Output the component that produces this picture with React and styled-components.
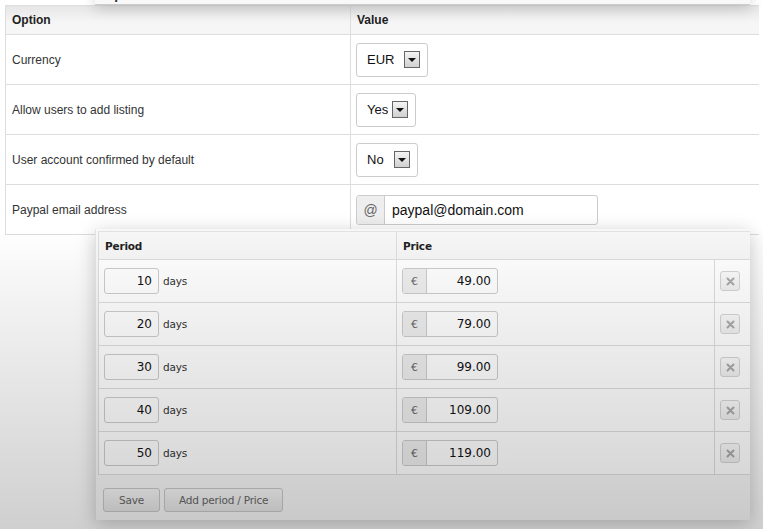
import React from 'react'
import styled, { createGlobalStyle } from 'styled-components'

const Global = createGlobalStyle`
    html, body {
        margin:0;
        padding:0;
        background:#fff;
    }
    body {
        font-family:'Liberation Sans', Arial, sans-serif;
        color:#333;
    }
`

const Page = styled.div`
    position:relative;
    width:763px;
    height:529px;
    overflow:hidden;
    background:#fff;
    padding:5px 0 0 5px;
    box-sizing:border-box;
`

const Fade = styled.div`
    position:absolute;
    left:0;
    right:0;
    top:228px;
    bottom:0;
    pointer-events:none;
    background:linear-gradient(to bottom, rgba(0,0,0,0) 0%, rgba(0,0,0,0.05) 25%, rgba(0,0,0,0.19) 100%);
    z-index:5;
`

/* ---------- options table ---------- */

const OptionsTable = styled.div`
    width:753px;
    border-left:1px solid #ddd;
    display:grid;
    grid-template-columns:344px 1fr;
`

const HeadCell = styled.div`
    height:30px;
    box-sizing:border-box;
    border-top:1px solid #ddd;
    border-bottom:1px solid #ddd;
    border-left:${p => p.$first ? 'none' : '1px solid #ddd'};
    background:linear-gradient(to bottom, #e6e6e6, #f6f6f6 60%, #f6f6f6);
    display:flex;
    align-items:center;
    padding-left:6px;
    font-weight:bold;
    font-size:12px;
    color:#222;
`

const Cell = styled.div`
    height:50px;
    box-sizing:border-box;
    border-bottom:1px solid #ddd;
    border-left:${p => p.$first ? 'none' : '1px solid #ddd'};
    display:flex;
    align-items:center;
    padding-left:${p => p.$first ? '6px' : '5px'};
    font-size:12px;
    color:#333;
`

const Select = styled.div`
    height:34px;
    box-sizing:border-box;
    border:1px solid #ccc;
    border-radius:3px;
    background:#fff;
    display:flex;
    align-items:center;
    padding:0 7px 0 10px;
    gap:${p => p.$gap}px;
    font-size:13px;
    color:#111;
`

const Arrow = styled.span`
    width:16px;
    height:17px;
    box-sizing:border-box;
    border:1px solid #666;
    background:linear-gradient(to bottom, #f4f4f4, #d0d0d0);
    display:flex;
    align-items:center;
    justify-content:center;
    &::after {
        content:'';
        border-left:4px solid transparent;
        border-right:4px solid transparent;
        border-top:4px solid #111;
    }
`

const InputGroup = styled.div`
    display:flex;
    height:30px;
    width:242px;
    box-sizing:border-box;
    border:1px solid #ccc;
    border-radius:3px;
    overflow:hidden;
    background:#fff;
`

const Addon = styled.span`
    width:${p => p.$w}px;
    flex:none;
    background:${p => p.$bg || '#eee'};
    border-right:1px solid #ccc;
    display:flex;
    align-items:center;
    justify-content:center;
    color:#666;
    font-size:${p => p.$size || 13}px;
`

const TextValue = styled.span`
    display:flex;
    align-items:center;
    padding-left:7px;
    font-size:14px;
    color:#111;
`

/* ---------- floating panels ---------- */

const PeekPanel = styled.div`
    position:absolute;
    left:95px;
    top:-24px;
    width:655px;
    height:28px;
    background:#f8f8f8;
    border-bottom:1px solid #ccc;
    box-shadow:0 4px 14px rgba(0,0,0,0.16);
    display:grid;
    grid-template-columns:292px 1fr;
    font-family:'DejaVu Sans', Tahoma, sans-serif;
    font-size:11px;
    font-weight:bold;
    color:#333;
    z-index:3;
    & > span {
        padding:14px 0 0 10px;
    }
`

const PricePanel = styled.div`
    position:absolute;
    left:95px;
    top:229px;
    width:655px;
    height:291px;
    box-sizing:border-box;
    background:#f7f7f7;
    border-left:1px solid #e4e4e4;
    box-shadow:0 4px 18px rgba(0,0,0,0.22);
    padding:2px 0 0 2px;
    font-family:'DejaVu Sans', Tahoma, sans-serif;
    z-index:4;
`

const PriceTable = styled.div`
    display:grid;
    grid-template-columns:297px 318px 1fr;
    border-left:1px solid #ddd;
    border-top:1px solid #e2e2e2;
`

const PHead = styled.div`
    height:28px;
    box-sizing:border-box;
    grid-column:${p => p.$span || 'auto'};
    border-bottom:1px solid #ddd;
    border-left:${p => p.$first ? 'none' : '1px solid #ddd'};
    background:#f6f6f6;
    display:flex;
    align-items:center;
    padding-left:6px;
    font-size:10.5px;
    font-weight:bold;
    color:#222;
    letter-spacing:-0.2px;
`

const PCell = styled.div`
    height:43px;
    box-sizing:border-box;
    border-bottom:1px solid #ddd;
    border-left:${p => p.$first ? 'none' : '1px solid #ddd'};
    background:#fff;
    display:flex;
    align-items:center;
    padding-left:${p => p.$first ? '5px' : '5px'};
    gap:4px;
`

const DaysInput = styled.span`
    width:55px;
    height:26px;
    box-sizing:border-box;
    border:1px solid #ccc;
    border-radius:3px;
    background:#fff;
    display:flex;
    align-items:center;
    justify-content:flex-end;
    padding-right:6px;
    font-size:12px;
    color:#111;
`

const Unit = styled.span`
    font-size:10.5px;
    color:#333;
    letter-spacing:-0.2px;
`

const PriceGroup = styled.span`
    display:flex;
    width:96px;
    height:26px;
    box-sizing:border-box;
    border:1px solid #ccc;
    border-radius:3px;
    overflow:hidden;
    background:#fff;
`

const PriceValue = styled.span`
    flex:1;
    display:flex;
    align-items:center;
    justify-content:flex-end;
    padding-right:6px;
    font-size:12px;
    color:#111;
`

const RemoveBtn = styled.span`
    width:20px;
    height:20px;
    box-sizing:border-box;
    border:1px solid #d4d4d4;
    border-radius:3px;
    background:linear-gradient(to bottom, #fafafa, #eeeeee);
    display:flex;
    align-items:center;
    justify-content:center;
`

const Toolbar = styled.div`
    display:flex;
    gap:4px;
    padding:13px 0 0 5px;
`

const Button = styled.button`
    height:24px;
    padding:0 ${p => p.$pad}px;
    border:1px solid #c8c8c8;
    border-radius:3px;
    background:linear-gradient(to bottom, #f6f6f6, #e6e6e6);
    font-family:'DejaVu Sans', Tahoma, sans-serif;
    font-size:10.5px;
    color:#666;
    letter-spacing:-0.2px;
`

const Cross = () => (
    <svg width="9" height="9" viewBox="0 0 9 9">
        <path d="M1.5 1.5 L7.5 7.5 M7.5 1.5 L1.5 7.5" stroke="#a8a8a8" strokeWidth="2" strokeLinecap="round" />
    </svg>
)

const options = [
    { label: 'Currency', value: 'EUR', gap: 10 },
    { label: 'Allow users to add listing', value: 'Yes', gap: 4 },
    { label: 'User account confirmed by default', value: 'No', gap: 10 },
]

const periods = [
    { days: 10, price: '49.00' },
    { days: 20, price: '79.00' },
    { days: 30, price: '99.00' },
    { days: 40, price: '109.00' },
    { days: 50, price: '119.00' },
]

const App = () => {
    return (
        <Page>
            <Global />
            <OptionsTable>
                <HeadCell $first>Option</HeadCell>
                <HeadCell>Value</HeadCell>
                {options.map(o => (
                    <React.Fragment key={o.label}>
                        <Cell $first>{o.label}</Cell>
                        <Cell>
                            <Select $gap={o.gap}>
                                {o.value}
                                <Arrow />
                            </Select>
                        </Cell>
                    </React.Fragment>
                ))}
                <Cell $first>Paypal email address</Cell>
                <Cell>
                    <InputGroup>
                        <Addon $w={27} $size={14}>@</Addon>
                        <TextValue>paypal@domain.com</TextValue>
                    </InputGroup>
                </Cell>
            </OptionsTable>

            <PeekPanel>
                <span>Option</span>
                <span>Value</span>
            </PeekPanel>

            <PricePanel>
                <PriceTable>
                    <PHead $first>Period</PHead>
                    <PHead $span="span 2">Price</PHead>
                    {periods.map(p => (
                        <React.Fragment key={p.days}>
                            <PCell $first>
                                <DaysInput>{p.days}</DaysInput>
                                <Unit>days</Unit>
                            </PCell>
                            <PCell>
                                <PriceGroup>
                                    <Addon $w={23} $size={11}>€</Addon>
                                    <PriceValue>{p.price}</PriceValue>
                                </PriceGroup>
                            </PCell>
                            <PCell>
                                <RemoveBtn><Cross /></RemoveBtn>
                            </PCell>
                        </React.Fragment>
                    ))}
                </PriceTable>
                <Toolbar>
                    <Button $pad={15}>Save</Button>
                    <Button $pad={14}>Add period / Price</Button>
                </Toolbar>
            </PricePanel>
            <Fade />
        </Page>
    )
}

export default App
